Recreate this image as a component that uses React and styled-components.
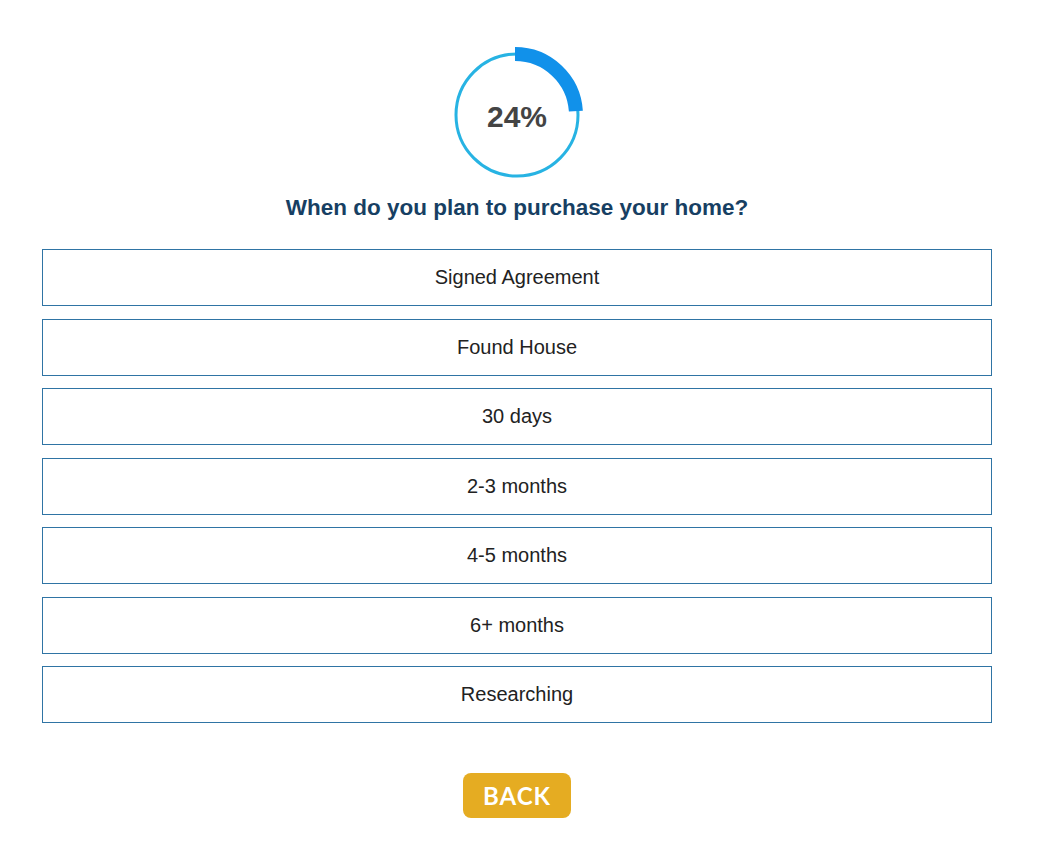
import React from "react"
import styled, {createGlobalStyle} from "styled-components"

const GlobalStyles = createGlobalStyle`
  body {
    margin: 0;
    background: #ffffff;
    font-family: "Liberation Sans", Arial, sans-serif;
  }
`

const Page = styled.div`
  width: 950px;
  padding: 45px 0 0 42px;
  display: flex;
  flex-direction: column;
  align-items: center;
`

const Progress = styled.div`
  position: relative;
  width: 140px;
  height: 140px;
  display: flex;
  align-items: center;
  justify-content: center;
`

const Ring = styled.svg`
  position: absolute;
  top: 0;
  left: 0;
`

const Percent = styled.span`
  position: relative;
  font-size: 30px;
  font-weight: bold;
  color: #444444;
  margin-top: 4px;
`

const Question = styled.h2`
  margin: 10px 0 0;
  font-size: 22.5px;
  font-weight: bold;
  color: #173f63;
`

const Options = styled.div`
  width: 100%;
  margin-top: 28px;
  display: flex;
  flex-direction: column;
  gap: 12.5px;
`

const Option = styled.button`
  width: 100%;
  height: 57px;
  border: 1px solid #2f74a4;
  background: #ffffff;
  font-family: "Liberation Sans", Arial, sans-serif;
  font-size: 20px;
  color: #222222;
  cursor: pointer;

  :hover {
    background: #f3f8fc;
  }
`

const BackButton = styled.button`
  margin-top: 50px;
  width: 108px;
  height: 45px;
  border: none;
  border-radius: 8px;
  background: #e5ac22;
  color: #ffffff;
  font-family: Lato, "Liberation Sans", sans-serif;
  font-size: 24px;
  font-weight: bold;
  letter-spacing: 1px;
  cursor: pointer;
`

const answers = [
  "Signed Agreement",
  "Found House",
  "30 days",
  "2-3 months",
  "4-5 months",
  "6+ months",
  "Researching",
]

function arcPath(cx, cy, r, pct) {
  const a = (pct / 100) * Math.PI * 2
  const x = cx + r * Math.sin(a)
  const y = cy - r * Math.cos(a)
  return `M ${cx} ${cy - r} A ${r} ${r} 0 ${pct > 50 ? 1 : 0} 1 ${x} ${y}`
}

export default function App() {
  const pct = 24
  return (
    <>
      <GlobalStyles />
      <Page>
        <Progress>
          <Ring width="140" height="140" viewBox="0 0 140 140">
            <circle cx="70" cy="70" r="61" fill="none" stroke="#27b3e3" strokeWidth="3" />
            <path d={arcPath(68, 70, 61, pct)} fill="none" stroke="#1191ea" strokeWidth="14" />
          </Ring>
          <Percent>{pct}%</Percent>
        </Progress>
        <Question>When do you plan to purchase your home?</Question>
        <Options>
          {answers.map(a => (
            <Option key={a}>{a}</Option>
          ))}
        </Options>
        <BackButton>BACK</BackButton>
      </Page>
    </>
  )
}
